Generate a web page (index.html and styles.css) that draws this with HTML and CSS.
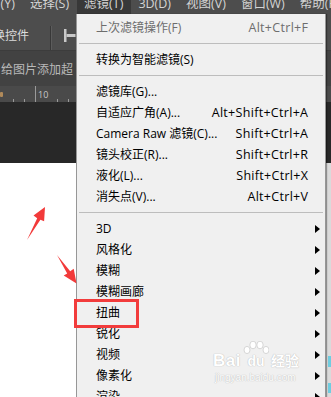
FILE: index.html
```html
<!DOCTYPE html>
<html>
<head>
<meta charset="utf-8">
<link rel="stylesheet" href="styles.css">
</head>
<body>
<div class="app">
  <div class="menubar">
    <div class="mb-inner">
      <span class="mb-item">文字(Y)</span>
      <span class="mb-item">选择(S)</span>
      <span class="mb-item active">滤镜(T)</span>
      <span class="mb-item">3D(D)</span>
      <span class="mb-item">视图(V)</span>
      <span class="mb-item">窗口(W)</span>
      <span class="mb-item">帮助(H)</span>
    </div>
  </div>
  <div class="options">
    <span class="opt-text">显示变换控件</span>
    <span class="opt-sep"></span>
    <svg class="opt-icon" width="12" height="14" viewBox="0 0 12 14">
      <rect x="0" y="0" width="2.5" height="13" fill="#c9c9c9"/>
      <rect x="2.5" y="5" width="9" height="3" fill="#c9c9c9"/>
    </svg>
  </div>
  <div class="tabs"><span class="tab-text">给图片添加超</span></div>
  <div class="ruler">
    <span class="r-mark"></span>
    <span class="tick s"></span>
    <span class="tick s"></span>
    <span class="tick big"></span>
    <span class="r-num">10</span>
    <span class="tick s"></span>
    <span class="tick s"></span>
    <span class="tick s"></span>
  </div>
  <div class="dark"></div>
  <div class="canvas">
    <div class="canvas-main"></div>
    <div class="side">
      <span class="cy c1"></span>
      <span class="cy c2"></span>
    </div>
  </div>
</div>

<div class="menu">
  <div class="row disabled"><span class="lbl">上次滤镜操作(F)</span><span class="sc">Alt+Ctrl+F</span><span class="arr"></span></div>
  <div class="sep"></div>
  <div class="row"><span class="lbl">转换为智能滤镜(S)</span><span class="arr"></span></div>
  <div class="sep"></div>
  <div class="row"><span class="lbl">滤镜库(G)...</span><span class="arr"></span></div>
  <div class="row"><span class="lbl">自适应广角(A)...</span><span class="sc">Alt+Shift+Ctrl+A</span><span class="arr"></span></div>
  <div class="row"><span class="lbl">Camera Raw 滤镜(C)...</span><span class="sc">Shift+Ctrl+A</span><span class="arr"></span></div>
  <div class="row"><span class="lbl">镜头校正(R)...</span><span class="sc">Shift+Ctrl+R</span><span class="arr"></span></div>
  <div class="row"><span class="lbl">液化(L)...</span><span class="sc">Shift+Ctrl+X</span><span class="arr"></span></div>
  <div class="row"><span class="lbl">消失点(V)...</span><span class="sc">Alt+Ctrl+V</span><span class="arr"></span></div>
  <div class="sep"></div>
  <div class="row"><span class="lbl">3D</span><span class="arr sub"></span></div>
  <div class="row"><span class="lbl">风格化</span><span class="arr sub"></span></div>
  <div class="row"><span class="lbl">模糊</span><span class="arr sub"></span></div>
  <div class="row"><span class="lbl">模糊画廊</span><span class="arr sub"></span></div>
  <div class="row"><span class="lbl">扭曲</span><span class="arr sub"></span></div>
  <div class="row"><span class="lbl">锐化</span><span class="arr sub"></span></div>
  <div class="row"><span class="lbl">视频</span><span class="arr sub"></span></div>
  <div class="row"><span class="lbl">像素化</span><span class="arr sub"></span></div>
  <div class="row"><span class="lbl">渲染</span><span class="arr sub"></span></div>
</div>

<div class="watermark">
  <div class="wm-top">
    <span class="wm-bai">Bai</span>
    <span class="wm-du">
      <svg class="paw" width="26" height="16" viewBox="0 0 26 16">
        <ellipse cx="4" cy="9" rx="3" ry="3.6" fill="#fff" stroke="#d6d6d6" stroke-width="1"/>
        <ellipse cx="10" cy="4" rx="3.2" ry="3.8" fill="#fff" stroke="#d6d6d6" stroke-width="1"/>
        <ellipse cx="17" cy="4" rx="3.2" ry="3.8" fill="#fff" stroke="#d6d6d6" stroke-width="1"/>
        <ellipse cx="23" cy="9" rx="3" ry="3.6" fill="#fff" stroke="#d6d6d6" stroke-width="1"/>
      </svg>
      <span class="du-text">du</span>
    </span>
    <span class="wm-jy">经验</span>
  </div>
  <div class="wm-url">jingyan.baidu.com</div>
</div>

<div class="redbox"></div>

<svg class="arrows" width="331" height="397" viewBox="0 0 331 397">
  <polygon points="27,240 37.2,218.2 33.5,215.5 45,207 44.1,221.3 40.4,219.8" fill="#f23a3a"/>
  <polygon points="57,255 70.2,271.2 73.7,268.8 76.5,283.5 63.7,275.6 67.2,273.4" fill="#f23a3a"/>
</svg>
</body>
</html>
```

FILE: styles.css
```css
* {
  box-sizing: border-box;
  margin: 0;
  padding: 0;
}

html, body {
  width: 331px;
  height: 397px;
  overflow: hidden;
}

body {
  position: relative;
  font-family: "Open Sans", "Noto Sans CJK SC", sans-serif;
  background: #ffffff;
}

.app {
  display: flex;
  flex-direction: column;
  height: 397px;
}

.menubar {
  height: 14px;
  flex: none;
  background: #4d4d4d;
  overflow: hidden;
  color: #d4d4d4;
  font-size: 12.5px;
}

.mb-inner {
  display: flex;
  margin-left: -32px;
  margin-top: -7px;
  line-height: 21px;
  white-space: nowrap;
}

.mb-item {
  padding: 0 7.5px;
}

.mb-item.active {
  background: #383838;
}

.options {
  height: 37px;
  flex: none;
  background: #4d4d4d;
  border-bottom: 1px solid #3c3c3c;
  display: flex;
  align-items: center;
  overflow: hidden;
  white-space: nowrap;
}

.opt-text {
  color: #dcdcdc;
  font-size: 12px;
  margin-left: -43px;
  margin-top: 7px;
  line-height: 16px;
}

.opt-sep {
  width: 1px;
  height: 24px;
  background: #383838;
  box-shadow: 1px 0 0 #5c5c5c;
  margin-left: 21px;
  align-self: flex-end;
}

.opt-icon {
  margin-left: 13px;
  margin-top: 7px;
}

.tabs {
  height: 35px;
  flex: none;
  background: #424242;
  overflow: hidden;
  white-space: nowrap;
  display: flex;
  align-items: center;
}

.tab-text {
  color: #b9b9b9;
  font-size: 12px;
  line-height: 16px;
  margin-top: 3px;
  margin-left: 1px;
}

.ruler {
  height: 16px;
  flex: none;
  background: #4a4a4a;
  display: flex;
  align-items: flex-end;
}

.r-mark {
  width: 3px;
  height: 5px;
  background: #b08a5a;
  margin-bottom: 5px;
  border-radius: 1px;
}

.tick {
  width: 1px;
  background: #9a9a9a;
}

.tick.s {
  height: 3px;
  margin-left: 10px;
}

.tick.big {
  height: 16px;
  margin-left: 10px;
}

.r-num {
  color: #c8c8c8;
  font-size: 9px;
  line-height: 10px;
  align-self: flex-start;
  margin-top: 4px;
  margin-left: 2px;
  width: 9px;
}

.dark {
  height: 61px;
  flex: none;
  background: #282828;
}

.canvas {
  flex: 1;
  display: flex;
}

.canvas-main {
  flex: 1;
  background: #ffffff;
}

.side {
  width: 5px;
  background: #dadada;
  display: flex;
  flex-direction: column;
  align-items: flex-end;
}

.cy {
  width: 3px;
  background: #6fcde0;
}

.cy.c1 {
  height: 11px;
  margin-top: 193px;
}

.cy.c2 {
  height: 10px;
  margin-top: 16px;
}

/* dropdown menu */
.menu {
  position: absolute;
  left: 76px;
  top: 14px;
  width: 250px;
  height: 400px;
  background: #f0f0f0;
  border-left: 1px solid #979797;
  border-right: 1px solid #979797;
  box-shadow: 1px 0 1px rgba(0, 0, 0, 0.35);
  padding-top: 3px;
}

.row {
  display: flex;
  height: 21px;
  line-height: 21px;
  padding-left: 19px;
  color: #000;
  font-size: 12px;
  white-space: nowrap;
}

.row.disabled {
  color: #6d6d6d;
}

.lbl {
  flex: 1;
}

.sc {
  font-size: 12.5px;
  letter-spacing: 0.3px;
  margin-right: -0.3px;
}

.arr {
  width: 17px;
  flex: none;
  position: relative;
}

.arr.sub::after {
  content: "";
  position: absolute;
  left: 7px;
  top: 6.5px;
  border-left: 5px solid #000;
  border-top: 4px solid transparent;
  border-bottom: 4px solid transparent;
}

.sep {
  height: 11px;
  display: flex;
  align-items: center;
  padding: 0 2px;
}

.sep::before {
  content: "";
  flex: 1;
  height: 1px;
  background: #bdbdbd;
}

/* watermark */
.watermark {
  position: absolute;
  left: 213px;
  top: 342px;
  width: 92px;
  color: #ffffff;
  font-family: "Liberation Sans", "Noto Sans CJK SC", sans-serif;
  text-shadow: 0 0 1px #b8b8b8, 0 0 1px #c8c8c8;
}

.wm-top {
  display: flex;
  align-items: flex-end;
  height: 28px;
}

.wm-bai {
  font-size: 17px;
  font-weight: bold;
  line-height: 18px;
  letter-spacing: 0.5px;
}

.wm-du {
  display: flex;
  flex-direction: column;
  align-items: center;
  width: 28px;
  margin-left: 1px;
}

.paw {
  display: block;
}

.du-text {
  font-size: 14px;
  font-weight: bold;
  line-height: 13px;
  margin-top: -2px;
  margin-bottom: 2px;
}

.wm-jy {
  font-size: 14px;
  font-weight: bold;
  line-height: 18px;
  margin-left: 1px;
}

.wm-url {
  font-size: 10px;
  line-height: 12px;
  margin-top: 2px;
  margin-left: 2px;
}

.redbox {
  position: absolute;
  left: 74px;
  top: 299px;
  width: 65px;
  height: 29px;
  border: 3px solid #f23c3c;
}

.arrows {
  position: absolute;
  left: 0;
  top: 0;
  pointer-events: none;
}
```
